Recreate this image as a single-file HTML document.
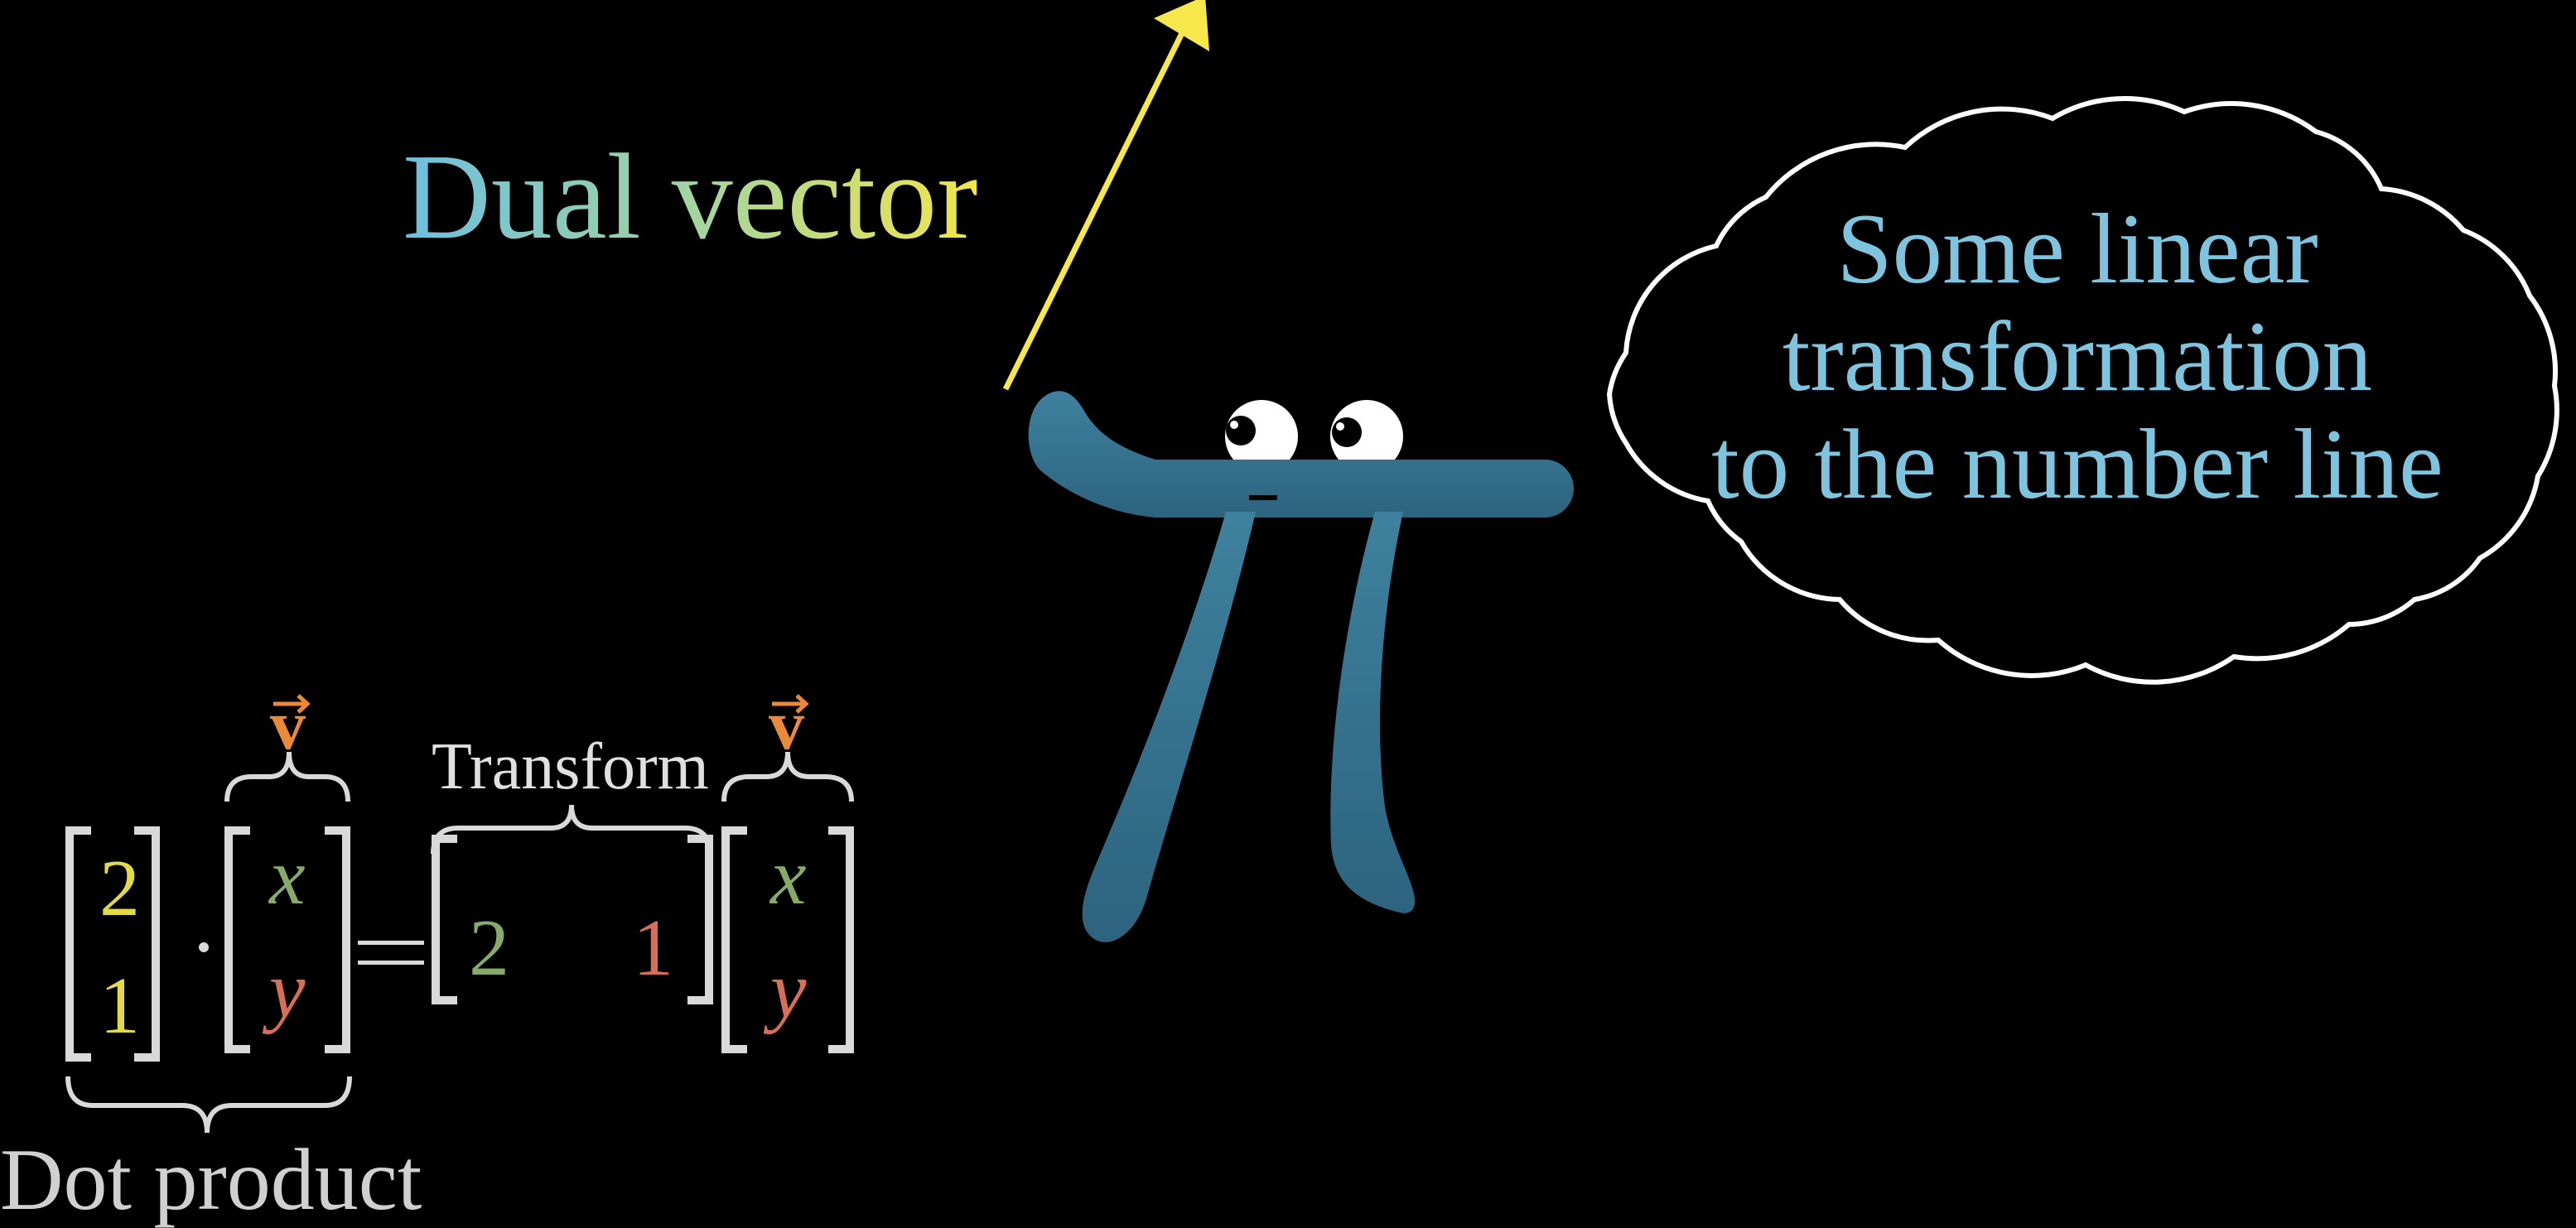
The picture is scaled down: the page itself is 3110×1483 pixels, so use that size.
<!DOCTYPE html>
<html><head><meta charset="utf-8"><style>
html,body{margin:0;padding:0;background:#000;}
body{width:3110px;height:1476px;position:relative;overflow:hidden;}
.t{position:absolute;white-space:nowrap;font-family:"Liberation Serif",serif;line-height:1;}
</style></head><body>
<svg width="3110" height="1476" style="position:absolute;left:0;top:0">
<defs>
<linearGradient id="pg" x1="0" y1="0" x2="0" y2="1"><stop offset="0" stop-color="#3e819e"/><stop offset="1" stop-color="#2d637e"/></linearGradient>
</defs>
<line x1="1214" y1="470" x2="1432" y2="30" stroke="#f6e84a" stroke-width="7"/>
<polygon points="1455,-5 1460,62 1393,22" fill="#f6e84a"/>
<ellipse cx="1523" cy="527" rx="44" ry="44" fill="#fff"/>
<ellipse cx="1650" cy="527" rx="44" ry="44" fill="#fff"/>
<circle cx="1498" cy="520" r="18" fill="#000"/>
<circle cx="1626" cy="522" r="18" fill="#000"/>
<circle cx="1490" cy="513" r="5" fill="#fff"/>
<circle cx="1618" cy="515" r="5" fill="#fff"/>
<path fill="url(#pg)" d="M1395 555 L1865 555 A35 35 0 0 1 1865 625 L1395 625 C1340 620,1290 597,1256 568 C1236 548,1236 495,1262 478 C1285 463,1300 480,1310 498 C1325 523,1350 541,1395 555 Z"/>
<path fill="url(#pg)" d="M1480 618 L1516 618 C1480 773,1420 958,1385 1082 C1370 1136,1330 1152,1312 1125 C1300 1105,1310 1074,1325 1039 C1380 912,1440 757,1480 618 Z"/>
<path fill="url(#pg)" d="M1660 618 L1694 618 C1670 727,1658 866,1672 974 C1680 1020,1700 1051,1707 1079 C1712 1101,1700 1105,1690 1102 C1640 1090,1610 1067,1607 1020 C1602 897,1625 742,1660 618 Z"/>
<rect x="1508" y="598" width="34" height="6" fill="#000"/>
<path fill="none" stroke="#fff" stroke-width="6" d="M1963 426 A140 140 0 0 1 2072 297 A120 120 0 0 1 2132 238 A170 170 0 0 1 2300 178 A170 170 0 0 1 2478 143 A170 170 0 0 1 2637 135 A170 170 0 0 1 2796 159 A120 120 0 0 1 2875 228 A140 140 0 0 1 2974 278 A140 140 0 0 1 3054 357 A150 150 0 0 1 3084 466 A150 150 0 0 1 3064 575 A140 140 0 0 1 2994 674 A120 120 0 0 1 2915 724 A120 120 0 0 1 2836 754 A170 170 0 0 1 2697 793 A170 170 0 0 1 2518 803 A170 170 0 0 1 2340 773 A140 140 0 0 1 2221 724 A140 140 0 0 1 2102 654 A120 120 0 0 1 2062 605 A140 140 0 0 1 1963 535 A120 120 0 0 1 1943 476 A120 120 0 0 1 1963 426 Z"/>
<g fill="none" stroke="#d9d9d9" stroke-width="10">
<polyline points="110,1003 84,1003 84,1277 110,1277"/>
<polyline points="162,1003 188,1003 188,1277 162,1277"/>
<polyline points="302,1003 276,1003 276,1267 302,1267"/>
<polyline points="392,1003 418,1003 418,1267 392,1267"/>
<polyline points="552,1013 526,1013 526,1208 552,1208"/>
<polyline points="830,1013 856,1013 856,1208 830,1208"/>
<polyline points="902,1003 876,1003 876,1267 902,1267"/>
<polyline points="1000,1003 1026,1003 1026,1267 1000,1267"/>
</g>
<g fill="none" stroke="#d9d9d9" stroke-width="6">
<path d="M82 1300 Q82 1335 112 1335 L220 1335 Q250 1335 250 1368 Q250 1335 280 1335 L392 1335 Q422 1335 422 1300"/>
<path d="M274 968 Q274 938 304 938 L325 938 Q349 938 349 908 Q349 938 373 938 L392 938 Q420 938 420 968"/>
<path d="M874 968 Q874 938 904 938 L925 938 Q951 938 951 908 Q951 938 977 938 L996 938 Q1028 938 1028 968"/>
<path d="M523 1031 Q523 1000 553 1000 L665 1000 Q690 1000 690 972 Q690 1000 715 1000 L827 1000 Q857 1000 857 1031"/>
</g>
<rect x="432" y="1136" width="80" height="5" fill="#d9d9d9"/>
<rect x="432" y="1160" width="80" height="5" fill="#d9d9d9"/>
<circle cx="246" cy="1144" r="6" fill="#d9d9d9"/>
</svg>
<div class="t" style="left:486px;top:164px;font-size:148px;background:linear-gradient(90deg,#6cbfe0,#a9d69a 55%,#f2e64a);-webkit-background-clip:text;background-clip:text;color:transparent;">Dual vector</div>
<div class="t" style="left:2008px;top:236px;width:1000px;text-align:center;font-size:121px;line-height:130px;color:#7fc4de;">Some linear<br>transformation<br>to the number line</div>
<div class="t" style="left:0;top:1372px;font-size:106px;color:#d0d0d0;">Dot product</div>
<div class="t" style="left:521px;top:886px;font-size:80px;color:#e0e0e0;">Transform</div>
<div class="t" style="left:120px;top:1024px;font-size:98px;color:#e3da48;">2</div>
<div class="t" style="left:120px;top:1166px;font-size:98px;color:#e3da48;">1</div>
<div class="t" style="left:325px;top:1010px;font-size:98px;color:#85aa6a;font-style:italic;">x</div>
<div class="t" style="left:325px;top:1147px;font-size:98px;color:#d66f55;font-style:italic;">y</div>
<div class="t" style="left:930px;top:1010px;font-size:98px;color:#85aa6a;font-style:italic;">x</div>
<div class="t" style="left:930px;top:1147px;font-size:98px;color:#d66f55;font-style:italic;">y</div>
<div class="t" style="left:566px;top:1096px;font-size:98px;color:#85aa6a;">2</div>
<div class="t" style="left:764px;top:1096px;font-size:98px;color:#d66f55;">1</div>
<div class="t" style="left:326px;top:832px;font-size:86px;color:#ea8a38;font-weight:bold;">v</div>
<div class="t" style="left:928px;top:832px;font-size:86px;color:#ea8a38;font-weight:bold;">v</div>
<svg width="3110" height="1476" style="position:absolute;left:0;top:0">
<g stroke="#ea8a38" stroke-width="5" fill="none"><path d="M330 850 L370 850 M360 840 L371 850 L360 860"/><path d="M932 850 L972 850 M962 840 L973 850 L962 860"/></g>
</svg>
</body></html>
